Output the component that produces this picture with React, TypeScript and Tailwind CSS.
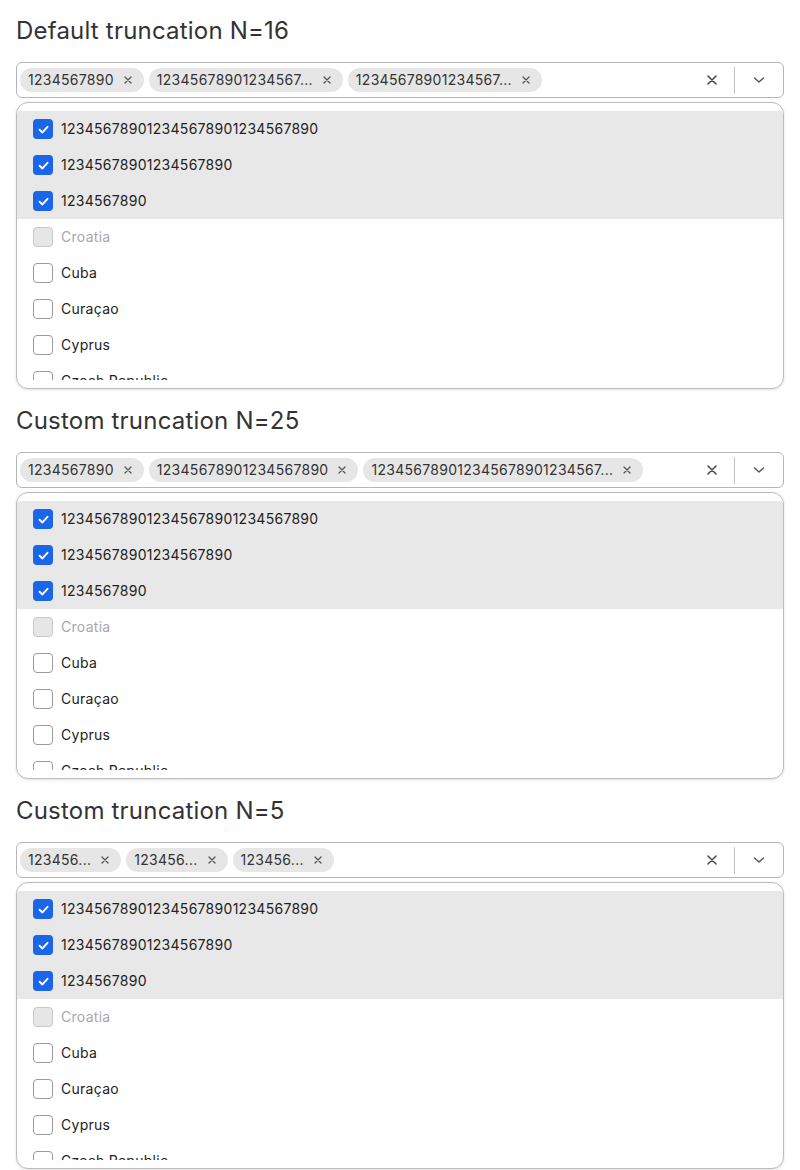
import React from "react";

const Check = () => (
  <svg width="13" height="13" viewBox="0 0 12 12" fill="none">
    <path d="M2.4 6.2L5 8.7L9.7 3.5" stroke="white" strokeWidth="1.8" strokeLinecap="round" strokeLinejoin="round" />
  </svg>
);

const SmallX = () => (
  <svg width="8" height="8" viewBox="0 0 8 8" fill="none">
    <path d="M1 1L7 7M7 1L1 7" stroke="#555" strokeWidth="1.3" strokeLinecap="round" />
  </svg>
);

const ClearX = () => (
  <svg width="10" height="10" viewBox="0 0 10 10" fill="none">
    <path d="M1 1L9 9M9 1L1 9" stroke="#444" strokeWidth="1.5" strokeLinecap="round" />
  </svg>
);

const Chevron = () => (
  <svg width="12" height="8" viewBox="0 0 12 8" fill="none">
    <path d="M1.5 2L6 6L10.5 2" stroke="#555" strokeWidth="1.5" strokeLinecap="round" strokeLinejoin="round" />
  </svg>
);

type Item = { label: string; checked?: boolean; disabled?: boolean };

const items: Item[] = [
  { label: "123456789012345678901234567890", checked: true },
  { label: "12345678901234567890", checked: true },
  { label: "1234567890", checked: true },
  { label: "Croatia", disabled: true },
  { label: "Cuba" },
  { label: "Curaçao" },
  { label: "Cyprus" },
  { label: "Czech Republic" },
];

function Section({ title, tags }: { title: string; tags: string[] }) {
  return (
    <div className="mb-[15px]">
      <h2 className="h-8 pt-px text-2xl leading-8 tracking-[0.2px] text-[#333] font-normal">{title}</h2>
      <div className="mt-4 flex h-9 items-center rounded-md border border-[#b5b5b5] bg-white">
        <div className="flex flex-1 items-center gap-[5px] pl-[3px]">
          {tags.map((t, i) => (
            <span
              key={i}
              className="flex h-6 items-center gap-[10px] rounded-full bg-[#e6e6e6] pl-2 pr-3 text-sm tracking-[0.28px] text-[#333]"
            >
              <span>{t}</span>
              <SmallX />
            </span>
          ))}
        </div>
        <div className="flex w-[44px] items-center justify-center">
          <ClearX />
        </div>
        <div className="h-[27px] w-px bg-[#c4c4c4]" />
        <div className="flex w-12 items-center justify-center">
          <Chevron />
        </div>
      </div>
      <div className="mt-1 flex h-[287px] flex-col rounded-xl border border-[#bcbcbc] bg-white py-2 shadow-[0_1px_3px_rgba(0,0,0,0.12)]">
        <div className="flex-1 overflow-hidden">
          {items.map((it, i) => (
            <div
              key={i}
              className={
                "flex h-9 items-center gap-2 pl-4 text-sm tracking-[0.28px] " +
                (it.checked ? "bg-[#e8e8e8] text-[#222]" : it.disabled ? "text-[#a8a8a8]" : "text-[#222]")
              }
            >
              {it.checked ? (
                <span className="flex h-5 w-5 items-center justify-center rounded-[4px] bg-[#1a65e8]">
                  <Check />
                </span>
              ) : it.disabled ? (
                <span className="h-5 w-5 rounded-[4px] border border-[#c8c8c8] bg-[#e6e6e6]" />
              ) : (
                <span className="h-5 w-5 rounded-[4px] border border-[#9a9a9a] bg-white" />
              )}
              <span>{it.label}</span>
            </div>
          ))}
        </div>
      </div>
    </div>
  );
}

export default function App() {
  return (
    <div className="bg-white px-4 pt-[14px]" style={{ fontFamily: "Inter, 'Noto Sans', sans-serif" }}>
      <Section
        title="Default truncation N=16"
        tags={["1234567890", "12345678901234567...", "12345678901234567..."]}
      />
      <Section
        title="Custom truncation N=25"
        tags={["1234567890", "12345678901234567890", "123456789012345678901234567..."]}
      />
      <Section title="Custom truncation N=5" tags={["123456...", "123456...", "123456..."]} />
    </div>
  );
}
